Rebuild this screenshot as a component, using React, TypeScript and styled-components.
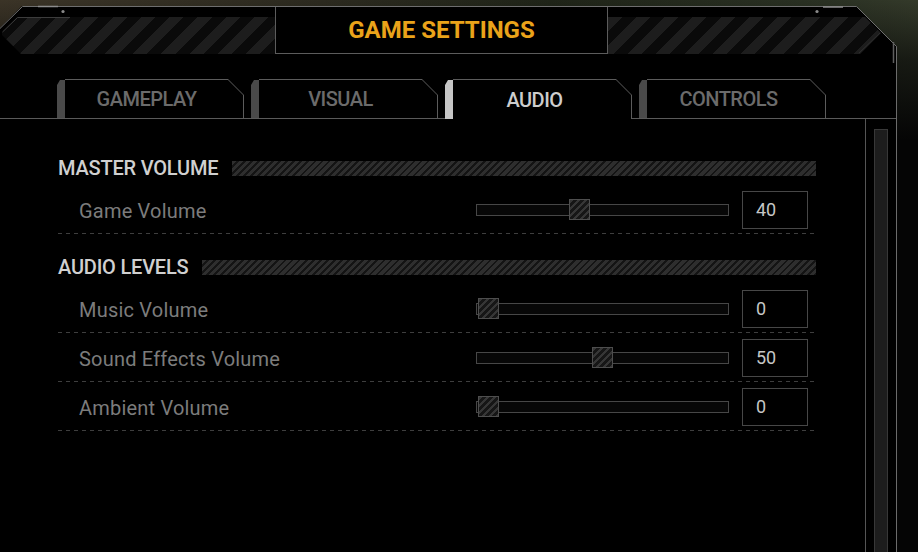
import React from "react";
import styled, { createGlobalStyle } from "styled-components";

const GlobalStyle = createGlobalStyle`
  html, body { margin: 0; padding: 0; background: #000; }
  body { font-family: Roboto, "Noto Sans", sans-serif; }
  * { box-sizing: border-box; }
`;

const Frame = styled.div`
  position: relative;
  width: 918px;
  height: 552px;
  overflow: hidden;
  display: flex;
  flex-direction: column;
  background:
    linear-gradient(180deg, rgba(5, 5, 5, 0) 0, rgba(5, 5, 5, 0.6) 60px, #050505 140px),
    linear-gradient(90deg, #3b3427 0%, #2c2a1f 35%, #1f2418 60%, #2a3123 90%, #343a2a 100%);
`;

const Panel = styled.div`
  margin-top: 6px;
  width: 897px;
  flex: 1;
  display: flex;
  flex-direction: column;
  background: #000;
  border-right: 1px solid #6b6b6b;
  clip-path: polygon(22px 0, 856px 0, 897px 41px, 897px 100%, 0 100%, 0 22px);
`;

const Trim = styled.svg`
  position: absolute;
  left: 0;
  top: 0;
  pointer-events: none;
`;

const Header = styled.header`
  display: flex;
  height: 48px;
`;

const SidePlate = styled.div<{ $side: "left" | "right" }>`
  flex: ${(p) => (p.$side === "left" ? "0 0 275px" : "1 1 auto")};
  padding-top: 11px;
`;

const Hatch = styled.div<{ $side: "left" | "right" }>`
  height: 37px;
  background: repeating-linear-gradient(135deg, #1d1d1d 0 10px, #0a0a0a 10px 20px);
  clip-path: ${(p) =>
    p.$side === "left"
      ? "polygon(17px 0, 100% 0, 100% 100%, 21px 100%, 2px 18px, 2px 15px)"
      : "polygon(0 0, 257px 0, 273px 16px, 252px 100%, 0 100%)"};
`;

const TitleBox = styled.div`
  flex: 0 0 333px;
  display: flex;
  align-items: center;
  justify-content: center;
  border-left: 1px solid #5c5c5c;
  border-right: 1px solid #5c5c5c;
  border-bottom: 1px solid #5c5c5c;
  color: #eaa31a;
  font-size: 24px;
  font-weight: 700;
  letter-spacing: 0;
`;

const TabBar = styled.nav`
  display: flex;
  gap: 7px;
  margin-top: 25px;
  padding-left: 57px;
  border-bottom: 1px solid #5a5a5a;
`;

const Tab = styled.div<{ $active?: boolean }>`
  display: flex;
  width: 187px;
  height: ${(p) => (p.$active ? "40px" : "39px")};
  margin-bottom: ${(p) => (p.$active ? "-1px" : "0")};
`;

const TabAccent = styled.span<{ $active?: boolean }>`
  flex: 0 0 8px;
  margin-top: 1px;
  background: ${(p) => (p.$active ? "#c6c6c6" : "#4a4a4a")};
  clip-path: polygon(0 5px, 3px 0, 100% 0, 100% 100%, 0 100%);
`;

const TabBody = styled.div`
  flex: 1;
  padding: 1px 1px 0 0;
  background: #5c5c5c;
  clip-path: polygon(0 0, calc(100% - 16px) 0, 100% 16px, 100% 100%, 0 100%);
`;

const TabFace = styled.div<{ $active?: boolean }>`
  height: 100%;
  display: flex;
  align-items: center;
  justify-content: center;
  padding-right: 15px;
  background: #000;
  clip-path: polygon(0 0, calc(100% - 15px) 0, 100% 15px, 100% 100%, 0 100%);
  color: ${(p) => (p.$active ? "#cdcdcd" : "#6b6b6b")};
  font-size: 20px;
  font-weight: 500;
  letter-spacing: -0.5px;
`;

const Content = styled.div`
  flex: 1;
  display: flex;
  min-height: 0;
`;

const Scroller = styled.div`
  flex: 0 0 866px;
  border-right: 1px solid #555;
  padding: 37px 0 0 58px;
  overflow: hidden;
`;

const List = styled.div`
  width: 758px;
  display: flex;
  flex-direction: column;
`;

const SectionHeader = styled.div<{ $first?: boolean }>`
  display: flex;
  align-items: center;
  gap: 14px;
  height: 24px;
  margin-top: ${(p) => (p.$first ? "0" : "21px")};
  margin-bottom: 5px;
  color: #d0d0d0;
  font-size: 20px;
  font-weight: 500;
  letter-spacing: -0.2px;
`;

const SectionHatch = styled.span`
  flex: 1;
  height: 15px;
  background: repeating-linear-gradient(135deg, #2e2e2e 0 3px, #141414 3px 5px);
`;

const Row = styled.div`
  display: grid;
  grid-template-columns: 1fr 253px 66px;
  align-items: center;
  column-gap: 13px;
  height: 49px;
  padding: 0 8px 0 21px;
  background: repeating-linear-gradient(90deg, #3e3e3e 0 4px, transparent 4px 8px) left bottom / 100% 1px no-repeat;
`;

const Label = styled.span`
  padding-top: 3px;
  color: #7c7c7c;
  font-size: 20px;
  font-weight: 400;
  letter-spacing: 0.2px;
`;

const Track = styled.div`
  position: relative;
  height: 12px;
  border: 1px solid #474747;
  background: #070707;
`;

const Thumb = styled.div`
  position: absolute;
  top: 50%;
  width: 21px;
  height: 21px;
  margin-top: -10.5px;
  border: 1px solid #4e4e4e;
  background: repeating-linear-gradient(135deg, #363636 0 2.5px, #161616 2.5px 5px);
`;

const ValueBox = styled.input`
  width: 66px;
  height: 38px;
  padding: 0 0 0 13px;
  margin: 0;
  border: 1px solid #474747;
  background: #000;
  color: #c6c6c6;
  font-family: Roboto, sans-serif;
  font-size: 18px;
  outline: none;
`;

const ScrollTrack = styled.div`
  flex: 1;
  padding: 10px 8px 0 8px;
`;

const ScrollThumb = styled.div`
  width: 14px;
  height: 100%;
  background: #1d1d1d;
  border: 1px solid #383838;
  border-bottom: none;
`;

const tabs = ["GAMEPLAY", "VISUAL", "AUDIO", "CONTROLS"];

type Setting = { label: string; value: number };
const sections: { title: string; items: Setting[] }[] = [
  { title: "MASTER VOLUME", items: [{ label: "Game Volume", value: 40 }] },
  {
    title: "AUDIO LEVELS",
    items: [
      { label: "Music Volume", value: 0 },
      { label: "Sound Effects Volume", value: 50 },
      { label: "Ambient Volume", value: 0 },
    ],
  },
];

function Slider({ value }: { value: number }) {
  return (
    <Track>
      <Thumb style={{ left: `calc(1px + (100% - 24px) * ${value / 100})` }} />
    </Track>
  );
}

export default function App() {
  return (
    <>
      <GlobalStyle />
      <Frame>
        <Panel>
          <Header>
            <SidePlate $side="left">
              <Hatch $side="left" />
            </SidePlate>
            <TitleBox>GAME SETTINGS</TitleBox>
            <SidePlate $side="right">
              <Hatch $side="right" />
            </SidePlate>
          </Header>
          <TabBar>
            {tabs.map((t) => {
              const active = t === "AUDIO";
              return (
                <Tab key={t} $active={active}>
                  <TabAccent $active={active} />
                  <TabBody>
                    <TabFace $active={active}>{t}</TabFace>
                  </TabBody>
                </Tab>
              );
            })}
          </TabBar>
          <Content>
            <Scroller>
              <List>
                {sections.map((s, i) => (
                  <React.Fragment key={s.title}>
                    <SectionHeader $first={i === 0}>
                      {s.title}
                      <SectionHatch />
                    </SectionHeader>
                    {s.items.map((it) => (
                      <Row key={it.label}>
                        <Label>{it.label}</Label>
                        <Slider value={it.value} />
                        <ValueBox readOnly value={String(it.value)} />
                      </Row>
                    ))}
                  </React.Fragment>
                ))}
              </List>
            </Scroller>
            <ScrollTrack>
              <ScrollThumb />
            </ScrollTrack>
          </Content>
        </Panel>
        <Trim width="918" height="70" viewBox="0 0 918 70">
          <path d="M0 28.5 L22.5 6.5 L856.5 6.5 L896.5 46.5 L896.5 70" fill="none" stroke="#6e6e6e" strokeWidth="1" />
          <path d="M893.5 42 L893.5 63" fill="none" stroke="#5e5e5e" strokeWidth="1.5" />
          <path d="M2.5 32 L17.5 17.5 L70 17.5" fill="none" stroke="#3c3c3c" strokeWidth="1" />
          <path d="M38 6.5 L58 6.5" stroke="#8c8c8c" strokeWidth="1.5" />
          <circle cx="63" cy="11.5" r="1.6" fill="#8a8a8a" />
          <path d="M823 7 L843 7" stroke="#8c8c8c" strokeWidth="1.5" />
          <circle cx="817" cy="11.5" r="1.6" fill="#8a8a8a" />
          <path d="M859 53 L880 33" fill="none" stroke="#2e2e2e" strokeWidth="1" />
        </Trim>
      </Frame>
    </>
  );
}
